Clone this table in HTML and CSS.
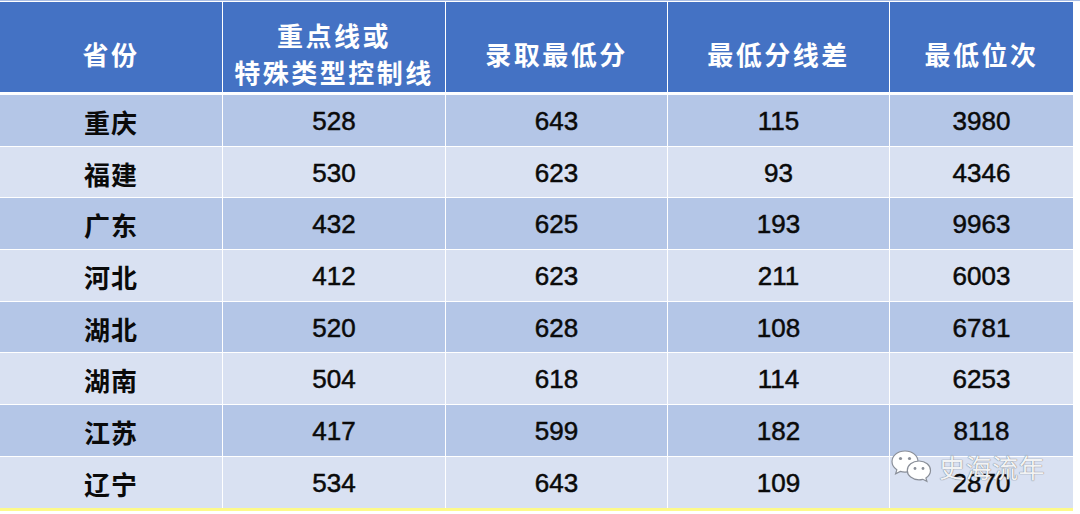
FILE: index.html
```html
<!DOCTYPE html>
<html lang="zh">
<head>
<meta charset="utf-8">
<link rel="stylesheet" href="styles.css">
</head>
<body>
<div class="page">
  <div class="table">
    <div class="row head">
      <div class="cell">省份</div>
      <div class="cell two">重点线或<br>特殊类型控制线</div>
      <div class="cell">录取最低分</div>
      <div class="cell">最低分线差</div>
      <div class="cell">最低位次</div>
    </div>
    <div class="body">
      <div class="row dark"><div class="cell prov">重庆</div><div class="cell num">528</div><div class="cell num">643</div><div class="cell num">115</div><div class="cell num">3980</div></div>
      <div class="row light"><div class="cell prov">福建</div><div class="cell num">530</div><div class="cell num">623</div><div class="cell num">93</div><div class="cell num">4346</div></div>
      <div class="row dark"><div class="cell prov">广东</div><div class="cell num">432</div><div class="cell num">625</div><div class="cell num">193</div><div class="cell num">9963</div></div>
      <div class="row light"><div class="cell prov">河北</div><div class="cell num">412</div><div class="cell num">623</div><div class="cell num">211</div><div class="cell num">6003</div></div>
      <div class="row dark"><div class="cell prov">湖北</div><div class="cell num">520</div><div class="cell num">628</div><div class="cell num">108</div><div class="cell num">6781</div></div>
      <div class="row light"><div class="cell prov">湖南</div><div class="cell num">504</div><div class="cell num">618</div><div class="cell num">114</div><div class="cell num">6253</div></div>
      <div class="row dark"><div class="cell prov">江苏</div><div class="cell num">417</div><div class="cell num">599</div><div class="cell num">182</div><div class="cell num">8118</div></div>
      <div class="row light"><div class="cell prov">辽宁</div><div class="cell num">534</div><div class="cell num">643</div><div class="cell num">109</div><div class="cell num">2870</div></div>
    </div>
    <div class="yellow"></div>
  </div>
  <div class="watermark">
    <svg class="wx" width="42" height="36" viewBox="0 0 42 36">
      <g fill="#ffffff" stroke="#8a8f99" stroke-width="1.2">
        <path d="M14 2 C6.5 2 1 6.8 1 12.6 C1 16 2.9 18.9 5.8 20.8 L4.6 24.8 L9.3 22.4 C10.8 22.9 12.4 23.1 14 23.1 C21.5 23.1 27 18.4 27 12.6 C27 6.8 21.5 2 14 2 Z"/>
        <path d="M28 12 C21.4 12 16.3 16.2 16.3 21.4 C16.3 26.6 21.4 30.8 28 30.8 C29.3 30.8 30.6 30.6 31.8 30.3 L35.9 32.4 L34.9 28.9 C37.6 27.1 39.5 24.4 39.5 21.4 C39.5 16.2 34.5 12 28 12 Z"/>
      </g>
      <g fill="#8a8f99">
        <circle cx="9.5" cy="9.5" r="1.6"/>
        <circle cx="18.5" cy="9.5" r="1.6"/>
        <circle cx="24" cy="19.5" r="1.4"/>
        <circle cx="32" cy="19.5" r="1.4"/>
      </g>
    </svg>
    <span class="wm-text">史海流年</span>
  </div>
</div>
</body>
</html>
```

FILE: styles.css
```css
html, body {
  margin: 0;
  padding: 0;
  background: #ffffff;
}

.page {
  position: relative;
  width: 1080px;
  height: 514px;
  overflow: hidden;
  padding-top: 1px;
  box-sizing: border-box;
  border-top: 1px solid #a9bde3;
}

.table {
  width: 1073px;
  display: flex;
  flex-direction: column;
  background: #ffffff;
}

.row {
  display: grid;
  grid-template-columns: 222px 222px 221px 221px 183px;
  column-gap: 1px;
}

.head {
  height: 90px;
  background: #ffffff;
  margin-bottom: 3px;
}

.head .cell {
  background: #4472c4;
  color: #ffffff;
  font-family: "Noto Sans CJK SC", "Noto Sans", sans-serif;
  font-weight: 700;
  font-size: 26px;
  letter-spacing: 2.5px;
  line-height: 37px;
  padding-top: 12px;
  box-sizing: border-box;
}

.body {
  display: grid;
  grid-template-rows: repeat(8, 50.7px);
  row-gap: 1px;
}

.cell {
  display: flex;
  align-items: center;
  justify-content: center;
  text-align: center;
}

.dark .cell {
  background: #b4c6e7;
}

.light .cell {
  background: #d9e1f2;
}

.prov {
  font-family: "Noto Sans CJK SC", sans-serif;
  font-weight: 700;
  font-size: 26px;
  letter-spacing: 1px;
  color: #0a0a0a;
  padding-top: 2px;
  box-sizing: border-box;
}

.num {
  font-family: "Liberation Sans", Arial, sans-serif;
  font-size: 26px;
  color: #0a0a0a;
  -webkit-text-stroke: 0.5px #0a0a0a;
  padding-top: 2px;
  box-sizing: border-box;
}

.yellow {
  height: 3px;
  background: #fdf98a;
}

.watermark {
  position: absolute;
  left: 891px;
  top: 447px;
  display: flex;
  align-items: center;
  gap: 6px;
}

.wx {
  display: block;
}

.wm-text {
  font-family: "Noto Sans CJK SC", sans-serif;
  font-size: 26px;
  font-weight: 400;
  color: rgba(255, 255, 255, 0.92);
  letter-spacing: 0.5px;
  text-shadow: 0 0 1px #7a808a, 0 0 1px #7a808a;
}
```
